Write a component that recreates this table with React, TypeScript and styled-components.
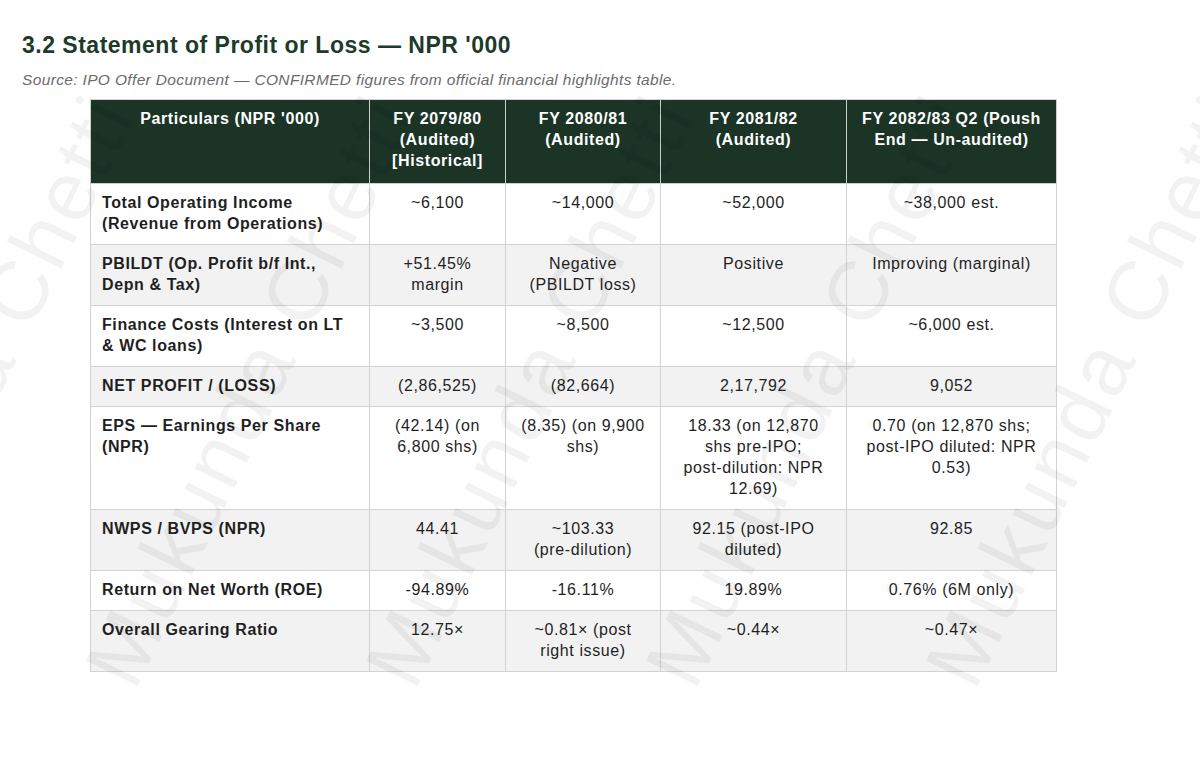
import styled, { createGlobalStyle } from 'styled-components';

const GlobalStyle = createGlobalStyle`
  html, body {
    margin: 0;
    padding: 0;
    background: #ffffff;
  }
  body {
    font-family: "Liberation Sans", Arial, Helvetica, sans-serif;
    color: #222;
  }
`;

const columns = [
  { label: "Particulars (NPR '000)", width: 279 },
  { label: 'FY 2079/80 (Audited) [Historical]', width: 136 },
  { label: 'FY 2080/81 (Audited)', width: 155 },
  { label: 'FY 2081/82 (Audited)', width: 186 },
  { label: 'FY 2082/83 Q2 (Poush End — Un-audited)', width: 210 },
];

const rows: string[][] = [
  ['Total Operating Income (Revenue from Operations)', '~6,100', '~14,000', '~52,000', '~38,000 est.'],
  ['PBILDT (Op. Profit b/f Int., Depn & Tax)', '+51.45% margin', 'Negative (PBILDT loss)', 'Positive', 'Improving (marginal)'],
  ['Finance Costs (Interest on LT & WC loans)', '~3,500', '~8,500', '~12,500', '~6,000 est.'],
  ['NET PROFIT / (LOSS)', '(2,86,525)', '(82,664)', '2,17,792', '9,052'],
  [
    'EPS — Earnings Per Share (NPR)',
    '(42.14) (on 6,800 shs)',
    '(8.35) (on 9,900 shs)',
    '18.33 (on 12,870 shs pre-IPO; post-dilution: NPR 12.69)',
    '0.70 (on 12,870 shs; post-IPO diluted: NPR 0.53)',
  ],
  ['NWPS / BVPS (NPR)', '44.41', '~103.33 (pre-dilution)', '92.15 (post-IPO diluted)', '92.85'],
  ['Return on Net Worth (ROE)', '-94.89%', '-16.11%', '19.89%', '0.76% (6M only)'],
  ['Overall Gearing Ratio', '12.75×', '~0.81× (post right issue)', '~0.44×', '~0.47×'],
];

// centres of the diagonal watermark strands
const marks: [number, number][] = [
  [-30, 390], [250, 390], [530, 390], [810, 390], [1090, 390],
];

// the source document never breaks a line after a hyphen
function Text({ value }: { value: string }) {
  const words = value.split(' ');
  return (
    <>
      {words.map((w, i) => (
        <span key={i}>
          {w.indexOf('-') > 0 ? <NoBreak>{w}</NoBreak> : w}
          {i < words.length - 1 ? ' ' : ''}
        </span>
      ))}
    </>
  );
}

function App() {
  return (
    <Page>
      <GlobalStyle />
      <Title>3.2 Statement of Profit or Loss — NPR '000</Title>
      <Source>Source: IPO Offer Document — CONFIRMED figures from official financial highlights table.</Source>
      <Table>
        <colgroup>
          {columns.map((c) => (
            <col key={c.label} style={{ width: c.width }} />
          ))}
        </colgroup>
        <thead>
          <tr>
            {columns.map((c) => (
              <HeadCell key={c.label}>
                <Text value={c.label} />
              </HeadCell>
            ))}
          </tr>
        </thead>
        <tbody>
          {rows.map((r, i) => (
            <Row key={r[0]} $striped={i % 2 === 1}>
              {r.map((v, j) => (
                <Cell key={j} $label={j === 0}>
                  <Text value={v} />
                </Cell>
              ))}
            </Row>
          ))}
        </tbody>
      </Table>
      <Watermarks>
        {marks.map(([x, y], i) => (
          <Mark key={i} style={{ left: x, top: y }}>
            Mukunda Chetti
          </Mark>
        ))}
      </Watermarks>
    </Page>
  );
}

export default App;

const Page = styled.div`
  position: relative;
  width: 1200px;
  height: 766px;
  overflow: hidden;
  padding: 31px 0 0 22px;
  box-sizing: border-box;
`;

const Title = styled.h1`
  margin: 0;
  font-size: 23px;
  line-height: 28px;
  font-weight: 700;
  letter-spacing: 0.5px;
  color: #1d3a2a;
`;

const Source = styled.p`
  margin: 11px 0 0;
  font-size: 15.5px;
  line-height: 20px;
  font-style: italic;
  letter-spacing: 0.35px;
  color: #6b6b6b;
`;

const Table = styled.table`
  margin: 9px 0 0 68px;
  width: 966px;
  table-layout: fixed;
  border-collapse: collapse;
  font-size: 16px;
  line-height: 21px;
  letter-spacing: 0.6px;
`;

const NoBreak = styled.span`
  white-space: nowrap;
`;

const HeadCell = styled.th`
  background: #1b3426;
  color: #ffffff;
  font-weight: 700;
  text-align: center;
  vertical-align: top;
  padding: 8px 12px 12px;
  border: 1px solid #c9cfcb;
  border-top-color: #d4d4d4;
`;

const Row = styled.tr<{ $striped: boolean }>`
  background: ${(p) => (p.$striped ? '#f2f2f2' : '#ffffff')};
`;

const Cell = styled.td<{ $label: boolean }>`
  padding: 8px 12px 10px ${(p) => (p.$label ? '11px' : '12px')};
  vertical-align: top;
  border: 1px solid #d2d2d2;
  text-align: ${(p) => (p.$label ? 'left' : 'center')};
  font-weight: ${(p) => (p.$label ? 700 : 400)};
  color: #1f1f1f;
`;

const Watermarks = styled.div`
  position: absolute;
  inset: 0;
  pointer-events: none;
  overflow: hidden;
`;

const Mark = styled.span`
  position: absolute;
  white-space: nowrap;
  font-family: "Liberation Sans", Arial, sans-serif;
  font-size: 84px;
  line-height: 84px;
  letter-spacing: 4px;
  color: rgba(0, 0, 0, 0.05);
  transform: translate(-50%, -50%) rotate(-64deg);
`;
